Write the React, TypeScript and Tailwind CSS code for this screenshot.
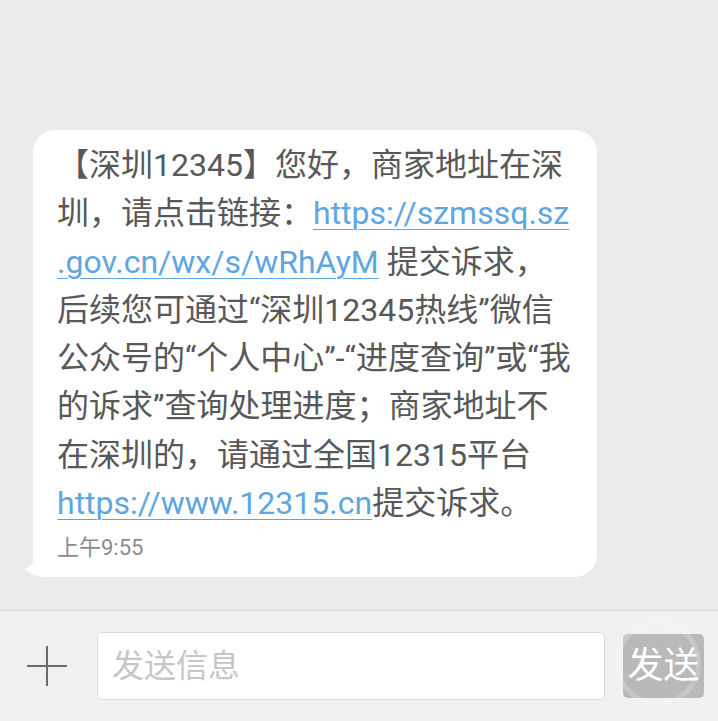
import React from "react";

const Link = ({ children }: { children: React.ReactNode }) => (
  <span className="text-[#5ea6e2] underline decoration-1 underline-offset-[5px]">
    {children}
  </span>
);

const lines: React.ReactNode[] = [
  <>【深圳12345】您好，商家地址在深</>,
  <>
    圳，请点击链接：<Link>https://szmssq.sz</Link>
  </>,
  <>
    <Link>.gov.cn/wx/s/wRhAyM</Link> 提交诉求，
  </>,
  <>后续您可通过“深圳12345热线”微信</>,
  <>公众号的“个人中心”-“进度查询”或“我</>,
  <>的诉求”查询处理进度；商家地址不</>,
  <>在深圳的，请通过全国12315平台</>,
  <>
    <Link>https://www.12315.cn</Link>提交诉求。
  </>,
];

export default function App() {
  return (
    <div
      className="w-[718px] h-[721px] flex flex-col bg-[#ebebeb] overflow-hidden"
      style={{ fontFamily: 'Roboto, "Noto Sans CJK SC", sans-serif' }}
    >
      <div className="flex-1 pt-[130px] pl-[33px]">
        <div className="relative w-[564px] h-[447px] bg-white rounded-[22px] pl-[24px] pt-[11px]">
          <svg
            className="absolute left-[-9px] bottom-0"
            width="30"
            height="24"
            viewBox="0 0 30 24"
          >
            <path d="M9 0 L9 8 Q8 14 0 15 Q6 22 18 24 L30 24 L30 0 Z" fill="#ffffff" />
          </svg>
          <div className="text-[32px] leading-[48.3px] text-[#585858] whitespace-nowrap">
            {lines.map((l, i) => (
              <div key={i}>{l}</div>
            ))}
          </div>
          <div className="mt-[8px] text-[22px] leading-[26px] text-[#8c8c8c]">上午9:55</div>
        </div>
      </div>
      <div className="h-[111px] border-t border-[#d8d8d8] bg-[#f1f1f1] flex items-center">
        <div className="w-[97px] flex justify-center pr-[3px]">
          <svg width="40" height="40" viewBox="0 0 40 40">
            <path d="M20 0 V40 M0 20 H40" stroke="#6b6b6b" strokeWidth="2" />
          </svg>
        </div>
        <div className="w-[508px] h-[68px] bg-white border border-[#dcdcdc] rounded-[5px] flex items-center pl-[14px] text-[32px] text-[#c6c6c6]">
          发送信息
        </div>
        <div className="ml-[18px] relative w-[81px] h-[64px] bg-[#b9b9b9] rounded-[5px] flex items-center justify-center text-[36px] text-white">
          <div className="absolute left-[-8px] top-[-14px] w-[86px] h-[86px] rounded-full border-[5px] border-white/20" />
          <span className="relative">发送</span>
        </div>
      </div>
    </div>
  );
}
